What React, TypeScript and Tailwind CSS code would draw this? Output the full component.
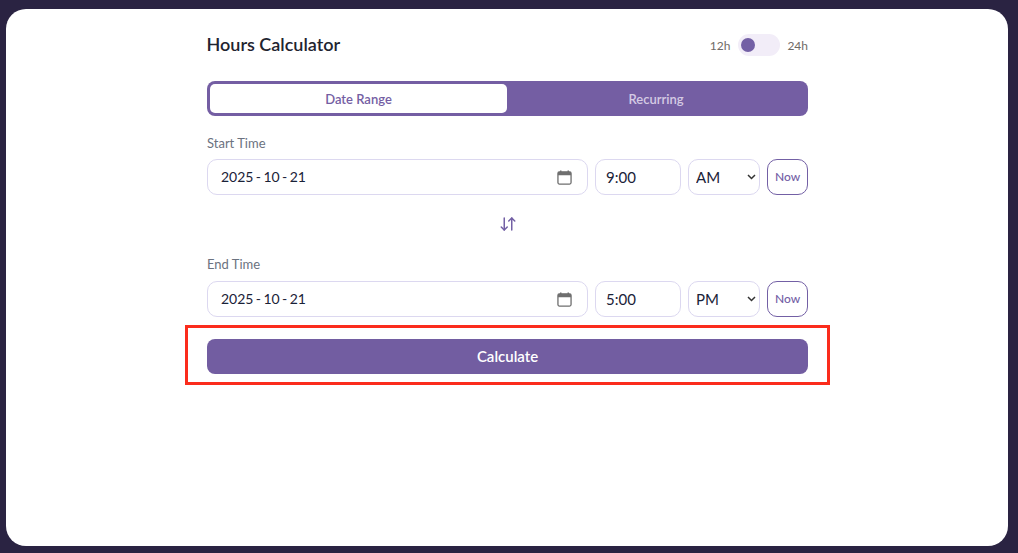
import { ArrowDownUp } from "lucide-react";

function CalendarIcon() {
    return (
        <svg width="15" height="15" viewBox="0 0 16 16" fill="none" className="shrink-0">
            <path d="M4 0.5V2.5M12 0.5V2.5" stroke="#6f6f6f" strokeWidth="1.6" />
            <rect x="1" y="2" width="14" height="13" rx="1.6" stroke="#6f6f6f" strokeWidth="1.4" />
            <rect x="1" y="2" width="14" height="3.6" fill="#6f6f6f" />
        </svg>
    );
}

function TimeRow({ date, time, period }: { date: string; time: string; period: string }) {
    return (
        <div className="flex gap-[7px] h-9 text-[15px] text-[#1a2238]">
            <div className="flex items-center justify-between w-[381px] pl-[13px] pr-[15px] bg-white border border-[#dcd8f0] rounded-[10px]">
                <span className="text-sm [word-spacing:-1.2px]">{date}</span>
                <CalendarIcon />
            </div>
            <input
                readOnly
                value={time}
                className="w-[86px] pl-[10px] bg-white border border-[#dcd8f0] rounded-[10px] outline-none"
            />
            <div className="relative w-[72px]">
                <select
                    defaultValue={period}
                    className="w-full h-full pl-[7px] appearance-none bg-white border border-[#dcd8f0] rounded-[10px] outline-none"
                >
                    <option>AM</option>
                    <option>PM</option>
                </select>
                <svg width="9" height="6" viewBox="0 0 9 6" fill="none" className="absolute right-[4px] top-[15px] pointer-events-none">
                    <path d="M1 1L4.5 4.5L8 1" stroke="#333" strokeWidth="1.5" />
                </svg>
            </div>
            <button className="w-[41px] bg-white border border-[#7360a5] rounded-[10px] text-xs font-medium text-[#7360a5]">
                Now
            </button>
        </div>
    );
}

export default function App() {
    return (
        <div className="relative h-[553px] w-[1018px] overflow-hidden bg-[#2a2342] pt-[9px] pl-[6px] font-['Lato',sans-serif]">
            <div className="w-[1002px] h-[537px] bg-white rounded-[20px] pl-[201px]">
                <div className="w-[601px] pt-[25px]">
                    {/* header */}
                    <div className="flex items-center justify-between h-[22px]">
                        <h1 className="-ml-[0.5px] -mt-0.5 text-lg font-semibold text-[#1f2430]">Hours Calculator</h1>
                        <div className="flex items-center text-xs text-[#6f6a66]">
                            <span className="pt-px">12h</span>
                            <div className="flex items-center w-[42px] h-[22px] ml-2 mr-[7px] pl-[3px] rounded-full bg-[#f2edf8]">
                                <div className="w-[14px] h-[14px] rounded-full bg-[#7360a5]" />
                            </div>
                            <span className="pt-px">24h</span>
                        </div>
                    </div>

                    {/* tabs */}
                    <div className="flex h-[35px] mt-[25px] p-[3px] rounded-lg bg-[#745ea3] text-[13px] font-semibold">
                        <div className="flex items-center justify-center w-[297px] pt-0.5 rounded-[5px] bg-white text-[#745ea3]">Date Range</div>
                        <div className="flex items-center justify-center flex-1 pt-0.5 text-[#d5cbe4]">Recurring</div>
                    </div>

                    {/* start */}
                    <div className="mt-[19px] mb-[8px] text-[13px] leading-4 text-[#6b7280]">Start Time</div>
                    <TimeRow date="2025 - 10 - 21" time="9:00" period="AM" />

                    <div className="flex justify-center mt-5 mb-[23px] text-[#7360a5]">
                        <ArrowDownUp size={18} strokeWidth={2} />
                    </div>

                    {/* end */}
                    <div className="mb-[9px] text-[13px] leading-4 text-[#6b7280]">End Time</div>
                    <TimeRow date="2025 - 10 - 21" time="5:00" period="PM" />

                    <button className="w-full h-[35px] mt-[22px] rounded-lg bg-[#725da1] text-[15px] font-semibold text-white">
                        Calculate
                    </button>
                </div>
            </div>

            {/* annotation */}
            <div className="absolute left-[185px] top-[325px] w-[645px] h-[60px] border-[3px] border-[#fb2c1c]" />
        </div>
    );
}
